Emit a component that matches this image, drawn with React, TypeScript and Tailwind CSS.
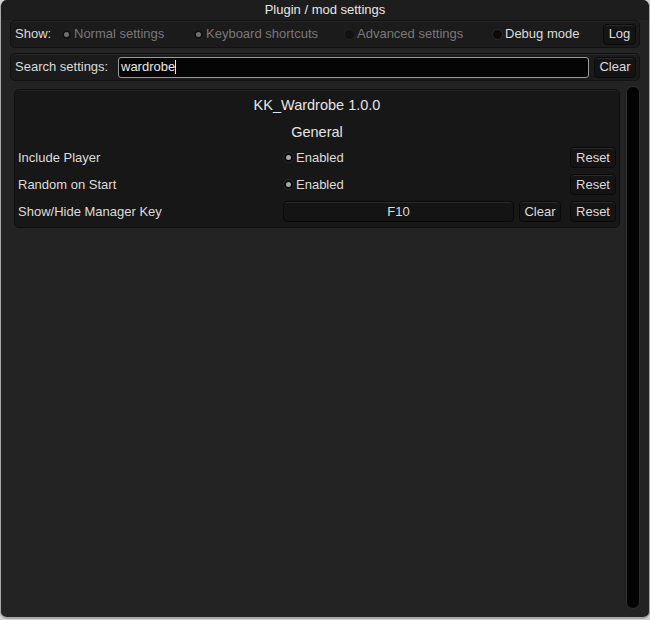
import React from 'react';

const font = { fontFamily: '"Liberation Sans", Arial, sans-serif' };

const Radio = ({ on, dim }: { on?: boolean; dim?: boolean }) => (
  <span
    className={`inline-flex items-center justify-center w-[11px] h-[11px] rounded-full border shrink-0 ${
      dim ? 'bg-[#111111] border-[#222222]' : 'bg-[#0a0a0a] border-[#2c2c2c]'
    }`}
  >
    {on && <span className={`w-[5px] h-[5px] rounded-full ${dim ? 'bg-[#707070]' : 'bg-[#a8a8a8]'}`} />}
  </span>
);

const Btn = ({ children, className = '' }: { children: React.ReactNode; className?: string }) => (
  <div
    className={`flex items-center justify-center h-[21px] shrink-0 rounded-[4px] bg-[#141414] border border-[#0a0a0a] shadow-[inset_0_1px_0_#2a2a2a] text-[#dcdcdc] text-[13px] ${className}`}
  >
    {children}
  </div>
);

const App = () => {
  const toolbar = [
    { label: 'Normal settings', on: true, width: 'w-[132px]' },
    { label: 'Keyboard shortcuts', on: true, width: 'w-[151px]' },
    { label: 'Advanced settings', on: false, width: 'w-[148px]' },
  ];

  return (
    <div className="w-[650px] h-[620px] bg-[#d2d2d2]" style={font}>
      <div className="h-[619px] flex flex-col rounded-[7px] bg-[#232323] border-x border-b-2 border-[#a8a8a8] overflow-hidden">
        {/* title */}
        <div className="h-[20px] shrink-0 flex items-center justify-center bg-[#1d1d1d] text-[13px] text-[#e6e6e6]">
          Plugin / mod settings
        </div>

        <div className="flex-1 flex flex-col px-[9px]">
          {/* show toolbar */}
          <div className="h-[28px] flex items-center pl-[4px] pr-[3px] rounded-[5px] bg-[#1b1b1b] border border-[#121212] shadow-[inset_0_1px_0_#262626] text-[13px]">
            <span className="w-[46px] text-[#dcdcdc]">Show:</span>
            {toolbar.map((t, i) => (
              <div key={i} className={`flex items-center gap-[2px] ${t.width}`}>
                <Radio on={t.on} dim />
                <span className="text-[#787878]">{t.label}</span>
              </div>
            ))}
            <div className="flex-1 flex items-center gap-[2px]">
              <Radio />
              <span className="text-[#dcdcdc]">Debug mode</span>
            </div>
            <Btn className="w-[33px]">Log</Btn>
          </div>

          {/* search */}
          <div className="mt-[5px] h-[28px] flex items-center pl-[4px] pr-[3px] rounded-[5px] bg-[#1b1b1b] border border-[#121212] shadow-[inset_0_1px_0_#262626] text-[13px]">
            <span className="w-[103px] text-[#dcdcdc]">Search settings:</span>
            <div className="flex-1 h-[21px] flex items-center px-[2px] rounded-[3px] bg-[#050505] border border-[#9a9a9a] text-[#e8e8e8]">
              wardrobe<span className="w-px h-[14px] bg-[#e8e8e8]" />
            </div>
            <Btn className="w-[42px] ml-[5px]">Clear</Btn>
          </div>

          {/* body */}
          <div className="flex-1 flex gap-[2px] mt-[5px] pb-[8px]">
            <div className="flex-1 pt-[3px] px-[4px]">
              <div className="h-[139px] rounded-[5px] bg-[#171717] border border-[#0f0f0f] shadow-[inset_0_1px_0_#222] px-[3px] text-[13px] text-[#dcdcdc]">
                <div className="h-[31px] pt-[1px] flex items-center justify-center text-[14.5px] text-[#e4e4e4]">KK_Wardrobe 1.0.0</div>
                <div className="h-[23px] flex items-center justify-center text-[14.5px] text-[#e4e4e4]">General</div>
                <div className="h-[27px] flex items-center">
                  <span className="w-[265px]">Include Player</span>
                  <div className="flex-1 flex items-center gap-[2px]">
                    <Radio on />
                    <span>Enabled</span>
                  </div>
                  <Btn className="w-[46px]">Reset</Btn>
                </div>
                <div className="h-[27px] flex items-center">
                  <span className="w-[265px]">Random on Start</span>
                  <div className="flex-1 flex items-center gap-[2px]">
                    <Radio on />
                    <span>Enabled</span>
                  </div>
                  <Btn className="w-[46px]">Reset</Btn>
                </div>
                <div className="h-[27px] flex items-center">
                  <span className="w-[265px]">Show/Hide Manager Key</span>
                  <Btn className="flex-1 !shrink">F10</Btn>
                  <Btn className="w-[42px] ml-[5px]">Clear</Btn>
                  <Btn className="w-[46px] ml-[9px]">Reset</Btn>
                </div>
              </div>
            </div>
            {/* scrollbar */}
            <div className="w-[14px] shrink-0 rounded-full bg-[#030303] border border-[#2e2e2e]" />
          </div>
        </div>
      </div>
    </div>
  );
};

export default App;
